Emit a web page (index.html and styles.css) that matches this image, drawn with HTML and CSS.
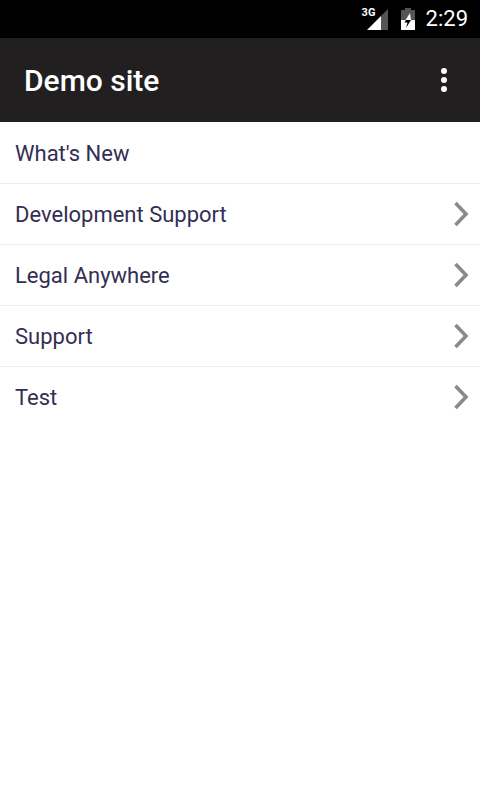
FILE: index.html
```html
<!DOCTYPE html>
<html>
<head>
    <meta charset="utf-8">
    <title>Demo site</title>
    <link rel="stylesheet" href="styles.css">
</head>
<body>
<div class="status-bar">
    <div class="signal-wrap">
        <span class="net-label">3G</span>
        <svg class="signal" width="21" height="21" viewBox="0 0 21 21">
            <polygon points="21,0 21,21 14,21 14,7" fill="#555"></polygon>
            <polygon points="14,7 14,21 0,21" fill="#fff"></polygon>
        </svg>
    </div>
    <svg class="battery" width="14" height="22" viewBox="0 0 14 22">
        <path d="M4 0h6v2h4v20H0V2h4z" fill="#555"></path>
        <path d="M0 12h14v10H0z" fill="#fff"></path>
        <path d="M8.500 12 5 12 3.500 14.500H6.500L5 20 10 12z" fill="#000"></path>
        <path d="M9 5 4.500 12H10z" fill="#fff"></path>
    </svg>
    <span class="clock">2:29</span>
</div>
<div class="action-bar">
    <h1 class="site-title">Demo site</h1>
    <div class="overflow-menu">
        <i></i><i></i><i></i>
    </div>
</div>
<ul class="menu-list">
    <li class="menu-item">What's New</li>
    <li class="menu-item">Development Support
        <svg class="chevron" width="16" height="26" viewBox="0 0 16 26"><path d="M2.500 2 13 13 2.500 24" fill="none" stroke="#8a8a8a" stroke-width="3.600"></path></svg>
    </li>
    <li class="menu-item">Legal Anywhere
        <svg class="chevron" width="16" height="26" viewBox="0 0 16 26"><path d="M2.500 2 13 13 2.500 24" fill="none" stroke="#8a8a8a" stroke-width="3.600"></path></svg>
    </li>
    <li class="menu-item">Support
        <svg class="chevron" width="16" height="26" viewBox="0 0 16 26"><path d="M2.500 2 13 13 2.500 24" fill="none" stroke="#8a8a8a" stroke-width="3.600"></path></svg>
    </li>
    <li class="menu-item">Test
        <svg class="chevron" width="16" height="26" viewBox="0 0 16 26"><path d="M2.500 2 13 13 2.500 24" fill="none" stroke="#8a8a8a" stroke-width="3.600"></path></svg>
    </li>
</ul>
</body>
</html>
```
FILE: styles.css
```css
* {
    margin: 0;
    padding: 0;
}
html, body {
    height: 100%;
}
body {
    background: #fff;
    font-family: Roboto, "Liberation Sans", sans-serif;
    overflow: hidden;
}
.status-bar {
    height: 38px;
    background: #000;
    display: flex;
    align-items: center;
    justify-content: flex-end;
    padding-right: 12px;
    color: #fff;
}
.signal-wrap {
    position: relative;
    width: 21px;
    height: 21px;
    margin-right: 13px;
}
.signal {
    display: block;
}
.net-label {
    position: absolute;
    left: -5px;
    top: -2px;
    font-size: 11px;
    font-weight: 700;
    line-height: 11px;
}
.battery {
    margin-right: 11px;
}
.clock {
    font-size: 22px;
    line-height: 38px;
}
.action-bar {
    height: 84px;
    background: #221f21;
    display: flex;
    align-items: center;
    justify-content: space-between;
    padding: 0 33px 0 24px;
}
.site-title {
    font-size: 30px;
    font-weight: 500;
    color: #fff;
}
.overflow-menu {
    display: flex;
    flex-direction: column;
    gap: 3px;
}
.overflow-menu i {
    display: block;
    width: 6px;
    height: 6px;
    border-radius: 6px;
    background: #fff;
}
.menu-list {
    list-style: none;
    padding-top: 1px;
}
.menu-item {
    height: 60px;
    border-bottom: 1px solid #ececec;
    padding: 0 11px 0 15px;
    display: flex;
    align-items: center;
    justify-content: space-between;
    font-size: 22px;
    color: #332e52;
}
.menu-item:last-child {
    border-bottom: none;
}
```
